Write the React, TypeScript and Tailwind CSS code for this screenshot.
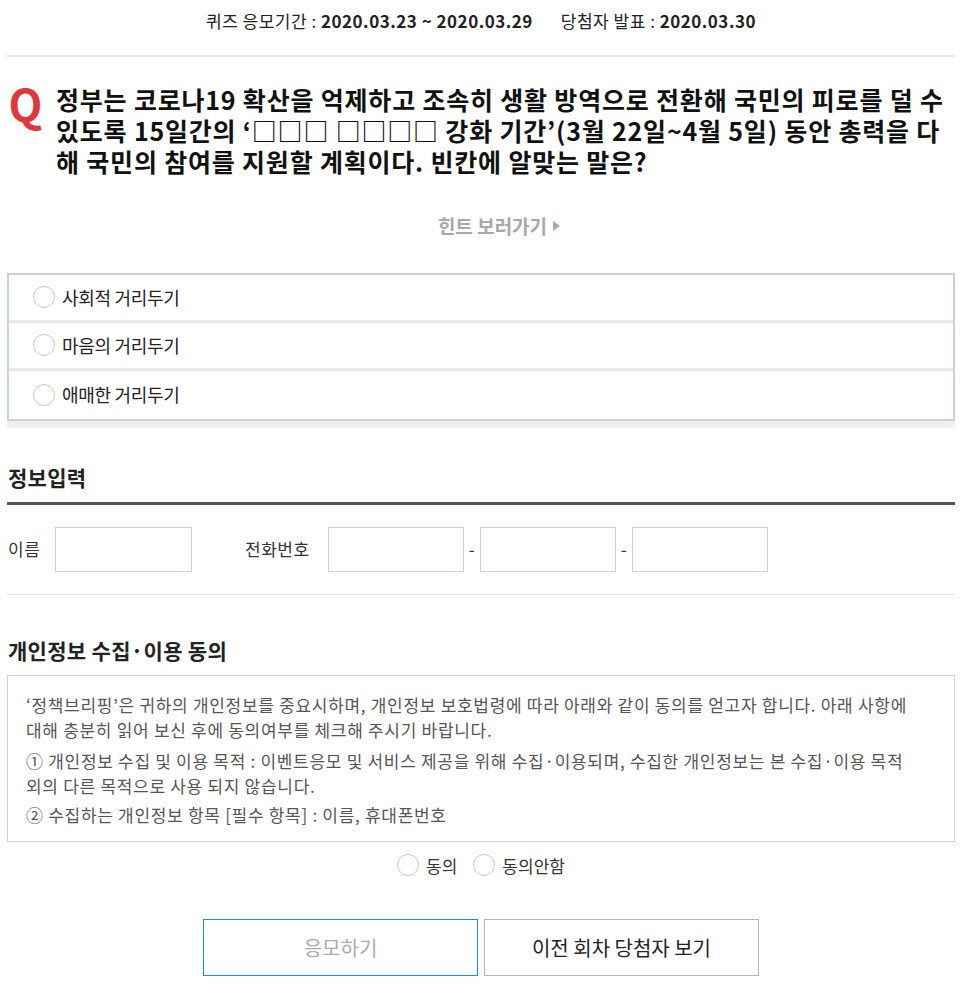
import React from "react";

const font = { fontFamily: '"Noto Sans CJK KR", "Noto Sans", sans-serif' };

function Radio() {
  return <span className="inline-block h-[22px] w-[22px] shrink-0 rounded-full border border-[#c8c8c8] bg-white" />;
}

const options = ["사회적 거리두기", "마음의 거리두기", "애매한 거리두기"];

export default function App() {
  return (
    <div className="w-[974px] bg-white text-[#222]" style={font}>
      <div className="mx-[7px] w-[948px]">
        <div className="flex h-[42px] items-center justify-center gap-[28px] text-[17px] tracking-[0.5px]">
          <span>
            퀴즈 응모기간 : <b>2020.03.23 ~ 2020.03.29</b>
          </span>
          <span>
            당첨자 발표 : <b>2020.03.30</b>
          </span>
        </div>
        <div className="mt-[13px] h-[2px] bg-[#e6e6ec]" />

        <div className="mt-[24px] flex gap-[12px]">
          <span className="w-[37px] shrink-0 pt-[2px] text-center text-[44px] leading-[40px] font-bold text-[#e0383a]">
            Q
          </span>
          <p className="break-all pt-[3px] text-[25px] leading-[31px] font-bold tracking-[0.8px] text-[#111]">
            정부는 코로나19 확산을 억제하고 조속히 생활 방역으로 전환해 국민의 피로를 덜 수 있도록 15일간의 ‘□□□ □□□□ 강화 기간’(3월 22일~4월 5일) 동안 총력을 다해 국민의 참여를 지원할 계획이다. 빈칸에 알맞는 말은?
          </p>
        </div>

        <div className="mt-[35px] flex items-center justify-center gap-[6px] pl-[36px] text-[19px] font-bold text-[#a8a8a8]">
          힌트 보러가기
          <svg width="7" height="10" viewBox="0 0 7 10">
            <path d="M0 0 L7 5 L0 10 Z" fill="#a8a8a8" />
          </svg>
        </div>

        <div className="mt-[32px] border-b-[7px] border-[#f0f0f0]">
          <div className="border-2 border-[#c9d1de]">
            {options.map((o, i) => (
              <label
                key={o}
                className={`flex h-[48px] items-center gap-[7px] pl-[24px] text-[18px] tracking-[-0.3px] ${
                  i < options.length - 1 ? "border-b-[3px] border-[#e8e8e8]" : ""
                }`}
              >
                <Radio />
                {o}
              </label>
            ))}
          </div>
        </div>

        <h2 className="mt-[34px] pl-[1px] text-[21px] leading-[30px] font-bold tracking-[0.3px] text-[#222]">정보입력</h2>
        <div className="mt-[10px] h-[3px] bg-[#555]" />

        <div className="mt-[22px] flex h-[45px] items-center text-[17px] tracking-[0.5px] text-[#333]">
          <span className="w-[48px] pl-[1px]">이름</span>
          <input className="h-[45px] w-[137px] border border-[#c9d1de] outline-none" />
          <span className="ml-[53px] w-[83px]">전화번호</span>
          <input className="h-[45px] w-[136px] border border-[#c9d1de] outline-none" />
          <span className="w-[16px] text-center">-</span>
          <input className="h-[45px] w-[136px] border border-[#c9d1de] outline-none" />
          <span className="w-[16px] text-center">-</span>
          <input className="h-[45px] w-[136px] border border-[#c9d1de] outline-none" />
        </div>
        <div className="mt-[22px] h-px bg-[#e4e4e4]" />

        <h2 className="mt-[40px] pl-[1px] text-[21px] leading-[30px] font-bold tracking-[0.3px] text-[#222]">
          개인정보 수집·이용 동의
        </h2>
        <div className="mt-[10px] border border-[#c9d1de] px-[18px] pt-[16px] pb-[14px] text-[17px] leading-[25px] tracking-[0.7px] text-[#555]">
          <p>
            ‘정책브리핑’은 귀하의 개인정보를 중요시하며, 개인정보 보호법령에 따라 아래와 같이 동의를 얻고자 합니다. 아래 사항에
            <br />
            대해 충분히 읽어 보신 후에 동의여부를 체크해 주시기 바랍니다.
          </p>
          <p className="mt-[6px]">
            ① 개인정보 수집 및 이용 목적 : 이벤트응모 및 서비스 제공을 위해 수집·이용되며, 수집한 개인정보는 본 수집·이용 목적
            <br />
            외의 다른 목적으로 사용 되지 않습니다.
          </p>
          <p className="mt-[4px]">② 수집하는 개인정보 항목 [필수 항목] : 이름, 휴대폰번호</p>
        </div>

        <div className="mt-[11px] flex items-center justify-center gap-[16px] text-[17px] text-[#333]">
          <label className="flex items-center gap-[7px]">
            <Radio />
            동의
          </label>
          <label className="flex items-center gap-[7px]">
            <Radio />
            동의안함
          </label>
        </div>

        <div className="mt-[41px] flex justify-center gap-[6px] pb-[20px]">
          <button className="h-[57px] w-[275px] border border-[#1a8fdb] text-[20px] text-[#aaa]">응모하기</button>
          <button className="h-[57px] w-[275px] border border-[#b4b4b4] text-[20px] text-[#222]">
            이전 회차 당첨자 보기
          </button>
        </div>
      </div>
    </div>
  );
}
